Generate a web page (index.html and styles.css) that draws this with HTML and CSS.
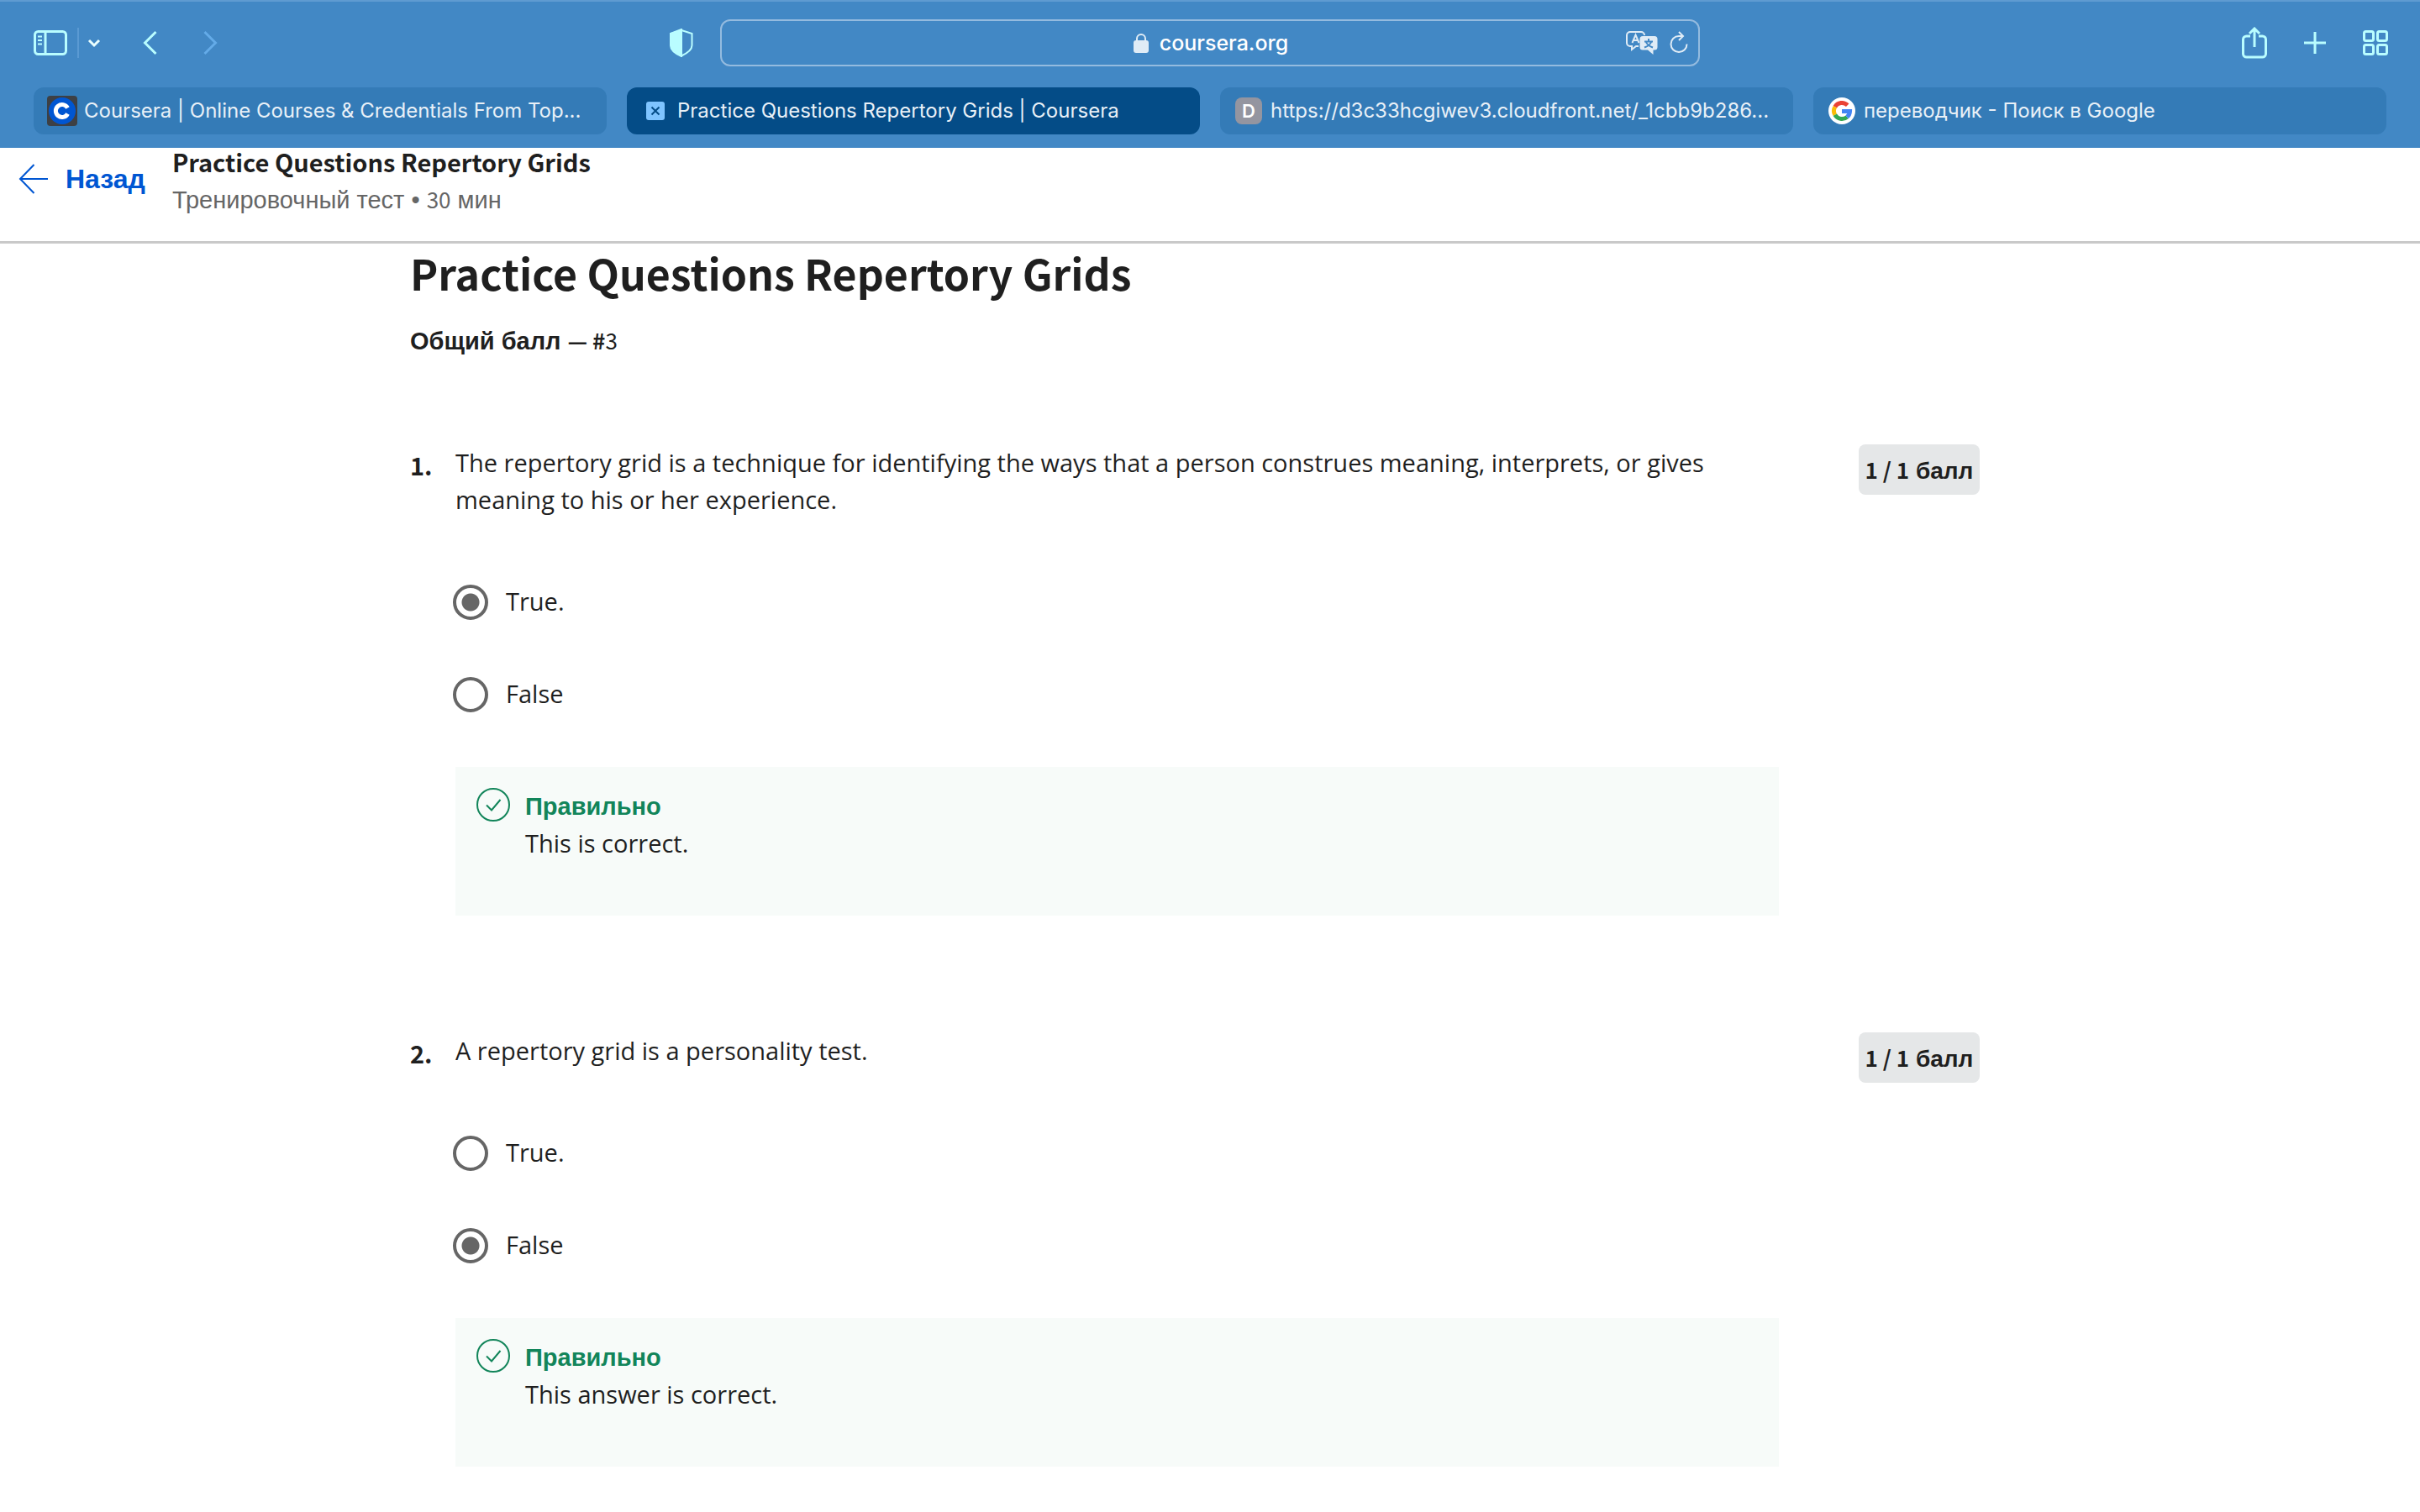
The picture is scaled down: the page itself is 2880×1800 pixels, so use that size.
FILE: index.html
```html
<!DOCTYPE html>
<html lang="ru">
<head>
<meta charset="utf-8">
<title>Practice Questions Repertory Grids | Coursera</title>
<link rel="stylesheet" href="styles.css">
</head>
<body>
<div class="browser">
  <div class="toolbar">
    <div class="tools tools-left">
      <button class="tool" aria-label="Sidebar"><svg width="40" height="30" viewBox="0 0 40 30"><rect x="1.500" y="1.500" width="37" height="27" rx="4"/><path d="M14 1v28"/><path d="M5 7.500h5M5 12h5M5 16.500h5" stroke-width="2"/></svg></button>
      <span class="divider"></span>
      <button class="tool tool-menu" aria-label="Tab groups"><svg width="16" height="12" viewBox="0 0 16 12"><path d="M2 3l6 6 6-6" stroke-width="3"/></svg></button>
      <button class="tool tool-back" aria-label="Back"><svg width="18" height="30" viewBox="0 0 18 30"><path d="M15.500 2L2.500 15l13 13" stroke-width="3"/></svg></button>
      <button class="tool tool-forward" aria-label="Forward" disabled><svg width="18" height="30" viewBox="0 0 18 30"><path d="M2.500 2l13 13-13 13" stroke-width="3"/></svg></button>
    </div>
    <button class="tool tool-shield" aria-label="Privacy report"><svg width="28" height="34" viewBox="0 0 28 34"><path d="M14 2L26.500 6v14c0 5-5 9-12.500 12.500C6.500 29 1.500 25 1.500 20V6z"/><path class="solid" d="M14 1L1 6v14c0 6 6 10 13 13z"/></svg></button>
    <div class="address">
      <span class="site">
        <svg width="18" height="24" viewBox="0 0 18 24"><rect class="solid" x="1" y="10" width="16" height="13" rx="2"/><path d="M4 11V7a5 5 0 0 1 10 0v4" stroke-width="2"/></svg>
        <span>coursera.org</span>
      </span>
      <button class="tool tool-page" aria-label="Translate"><svg width="38" height="28" viewBox="0 0 38 28"><path d="M15 18h-3l-5 4v-4H5a4 4 0 0 1-4-4V5a4 4 0 0 1 4-4h13a4 4 0 0 1 4 4"/><path d="M7.500 14L11.500 4.500l4 9.500M9 11h5"/><path class="solid" d="M20 6h14a3.500 3.500 0 0 1 3.500 3.500v9.500a3.500 3.500 0 0 1-3.500 3.500h-1.500V28L26 22.500h-6a3.500 3.500 0 0 1-3.500-3.500V9.500A3.500 3.500 0 0 1 20 6z" stroke="none"/><path class="cut" d="M27 9v3M22 12.500h10M30 13c-1 3-4 5-8 6.500M24 13c1 3 4 5 8 6.500"/></svg></button>
      <button class="tool tool-page" aria-label="Reload"><svg width="22" height="28" viewBox="0 0 22 28"><path d="M20.500 15.500a9.500 9.500 0 1 1-9.500-9.500h4M11 1l5 5-5 5"/></svg></button>
    </div>
    <div class="tools tools-right">
      <button class="tool" aria-label="Share"><svg width="30" height="38" viewBox="0 0 30 38"><path d="M10 11H5.500a4 4 0 0 0-4 4v17a4 4 0 0 0 4 4h19a4 4 0 0 0 4-4V15a4 4 0 0 0-4-4H20M15 24V2M9 8l6-6 6 6"/></svg></button>
      <button class="tool" aria-label="New tab"><svg width="28" height="28" viewBox="0 0 28 28"><path d="M14 1v26M1 14h26" stroke-width="3"/></svg></button>
      <button class="tool" aria-label="Tab overview"><svg width="30" height="30" viewBox="0 0 30 30"><rect x="1.500" y="1.500" width="11" height="11" rx="2"/><rect x="17.500" y="1.500" width="11" height="11" rx="2"/><rect x="1.500" y="17.500" width="11" height="11" rx="2"/><rect x="17.500" y="17.500" width="11" height="11" rx="2"/></svg></button>
    </div>
  </div>
  <nav class="tabs">
    <a class="tab" href="#"><svg width="36" height="36" viewBox="0 0 36 36"><rect width="36" height="36" rx="4" fill="#3d4045"/><circle cx="18" cy="18" r="16" fill="#0056d2"/><path d="M24.500 14.500a7.500 7.500 0 1 0 0 7" fill="none" stroke="#fff" stroke-width="5"/></svg><span>Coursera | Online Courses &amp; Credentials From Top...</span></a>
    <a class="tab tab-active" href="#"><svg width="36" height="22" viewBox="0 0 36 22"><rect x="7" width="22" height="22" rx="3" fill="#7fc4ff"/><path d="M13.500 6.500l9 9M22.500 6.500l-9 9" stroke="#044c87" stroke-width="2"/></svg><span>Practice Questions Repertory Grids | Coursera</span></a>
    <a class="tab" href="#"><span class="letter">D</span><span>https://d3c33hcgiwev3.cloudfront.net/_1cbb9b286...</span></a>
    <a class="tab" href="#"><svg width="36" height="32" viewBox="0 0 36 32"><circle cx="18" cy="16" r="16" fill="#fff"/><g fill="none" stroke-width="5"><path d="M24.700 9.300A9.500 9.500 0 0 0 9.800 11.200" stroke="#ea4335"/><path d="M9.800 11.200a9.500 9.500 0 0 0 0 9.600" stroke="#fbbc05"/><path d="M9.800 20.800a9.500 9.500 0 0 0 14.300 2.500" stroke="#34a853"/><path d="M24.100 23.300A9.500 9.500 0 0 0 27.500 16.500H18" stroke="#4285f4"/></g></svg><span>переводчик - Поиск в Google</span></a>
  </nav>
</div>

<header class="course-bar">
  <a class="back" href="#"><svg width="36" height="36" viewBox="0 0 36 36"><path d="M18.500 1L2 18l16.500 17M2 18h33"/></svg><span>Назад</span></a>
  <div class="course">
    <div class="course-name">Practice Questions Repertory Grids</div>
    <div class="course-info">Тренировочный тест • <span class="latin">30</span> мин</div>
  </div>
</header>

<main class="quiz">
  <h1>Practice Questions Repertory Grids</h1>
  <p class="total"><b>Общий балл <span class="latin">— #</span></b><span class="latin">3</span></p>

  <section class="question">
    <div class="number">1.</div>
    <div class="body">
      <p class="prompt">The repertory grid is a technique for identifying the ways that a person construes meaning, interprets, or gives meaning to his or her experience.</p>
      <div class="options">
        <label class="option"><input type="radio" name="q1" checked><span>True.</span></label>
        <label class="option"><input type="radio" name="q1"><span>False</span></label>
      </div>
      <div class="feedback">
        <svg width="40" height="40" viewBox="0 0 40 40"><circle cx="20" cy="20" r="19"/><path d="M12 20.500l6 6L28.500 14"/></svg>
        <div><p class="verdict">Правильно</p><p class="comment">This is correct.</p></div>
      </div>
    </div>
    <div class="score"><span class="latin">1 / 1</span> балл</div>
  </section>

  <section class="question">
    <div class="number">2.</div>
    <div class="body">
      <p class="prompt">A repertory grid is a personality test.</p>
      <div class="options">
        <label class="option"><input type="radio" name="q2"><span>True.</span></label>
        <label class="option"><input type="radio" name="q2" checked><span>False</span></label>
      </div>
      <div class="feedback">
        <svg width="40" height="40" viewBox="0 0 40 40"><circle cx="20" cy="20" r="19"/><path d="M12 20.500l6 6L28.500 14"/></svg>
        <div><p class="verdict">Правильно</p><p class="comment">This answer is correct.</p></div>
      </div>
    </div>
    <div class="score"><span class="latin">1 / 1</span> балл</div>
  </section>
</main>
</body>
</html>
```
FILE: styles.css
```css
* { box-sizing: border-box; }
body {
  margin: 0;
  background: #fff;
  color: #1f1f1f;
  font-family: "Open Sans", sans-serif;
  font-size: 29px;
  line-height: 44px;
}
h1, p { margin: 0; }
a { color: inherit; text-decoration: none; }
svg { display: block; flex: none; }
button { padding: 0; border: 0; background: none; font: inherit; }
.latin {
  font-family: "Noto Sans CJK SC", sans-serif;
  font-size: 26px;
  line-height: 1;
}

/* Browser chrome */
.browser {
  padding: 0 40px 16px;
  background: #4288c5;
  border-top: 2px solid #5f9bd1;
  font-family: Inter, sans-serif;
}
.toolbar {
  display: grid;
  grid-template-columns: 757px 30px 1fr 817px;
  align-items: center;
  height: 98px;
}
.tools { display: flex; align-items: center; }
.tools-right { justify-content: flex-end; gap: 43px; margin-right: -2px; }
.tool svg, .site svg { fill: none; stroke: #b9fdff; stroke-width: 2; }
.tools svg { stroke-width: 3; }
.tool .solid { fill: #b9fdff; }
.tool:disabled svg { stroke: #64abe8; }
.divider { width: 2px; height: 36px; margin: 0 10px 0 12px; background: #5a9ad3; }
.tool-menu { margin-right: 50px; }
.tool-menu svg { stroke: #eaffff; }
.tool-back { margin-right: 53px; }
.address {
  display: flex;
  align-items: center;
  gap: 14px;
  height: 56px;
  margin-left: 30px;
  padding: 0 12px;
  border: 2px solid #94bbdf;
  border-radius: 12px;
}
.site {
  flex: 1;
  display: flex;
  justify-content: center;
  align-items: center;
  gap: 13px;
  padding-left: 90px;
  color: #fff;
  font-size: 25px;
  font-weight: 500;
}
.site svg, .tool-page svg { stroke: #e0ecf6; }
.site .solid, .tool-page .solid { fill: #e0ecf6; }
.tool-page .cut { stroke: #4288c5; }
.tabs {
  display: grid;
  grid-template-columns: repeat(4, 1fr);
  gap: 24px;
  margin-top: 4px;
}
.tab {
  display: flex;
  align-items: center;
  gap: 8px;
  height: 56px;
  padding: 0 16px;
  overflow: hidden;
  border-radius: 12px;
  background: #347bb7;
  color: #e8f0f7;
  font-size: 24px;
  white-space: nowrap;
}
.tab-active { background: #044c87; }
.letter {
  width: 32px;
  height: 32px;
  margin: 0 2px;
  border-radius: 8px;
  background: #9495a0;
  color: #fff;
  font-size: 22px;
  font-weight: 600;
  line-height: 32px;
  text-align: center;
}

/* Course bar */
.course-bar {
  display: flex;
  gap: 32px;
  height: 114px;
  padding-left: 22px;
  border-bottom: 3px solid #c9c9c9;
}
.back {
  display: flex;
  align-items: center;
  gap: 20px;
  height: 74px;
  color: #0056d2;
  font-family: "Liberation Sans", Arial, sans-serif;
  font-size: 32px;
  font-weight: 700;
}
.back svg { fill: none; stroke: #0056d2; stroke-width: 2; }
.course-name {
  height: 40px;
  font-family: "Noto Sans CJK SC", sans-serif;
  font-size: 29px;
  font-weight: 700;
  line-height: 32px;
}
.course-info {
  color: #666;
  font-family: "Liberation Sans", Arial, sans-serif;
}

/* Quiz */
.quiz { padding: 0 524px 0 488px; }
h1 {
  font-family: "Noto Sans CJK SC", sans-serif;
  font-size: 50px;
  font-weight: 700;
  line-height: 68px;
}
.total {
  margin-top: 26px;
  font-family: "Liberation Sans", Arial, sans-serif;
}
.question {
  display: grid;
  grid-template-columns: 54px 1fr 144px;
  margin-top: 101px;
}
.question + .question { margin-top: 139px; }
.number {
  padding-top: 2px;
  font-family: "Noto Sans CJK SC", sans-serif;
  font-weight: 700;
}
.body { padding-right: 95px; }
.options {
  display: grid;
  gap: 66px;
  padding: 77px 0 65px;
}
.option { display: flex; align-items: center; gap: 21px; }
.option input {
  appearance: none;
  width: 42px;
  height: 42px;
  margin: 2px 0 0 -3px;
  border: 4px solid #666;
  border-radius: 50%;
}
.option input:checked { background: radial-gradient(circle, #666 10px, transparent 11px); }
.feedback {
  display: flex;
  gap: 18px;
  padding: 25px 25px 64px;
  background: #f7fbf9;
}
.feedback svg { fill: none; stroke: #12855a; stroke-width: 2; }
.verdict {
  color: #12855a;
  font-family: "Liberation Sans", Arial, sans-serif;
  font-weight: 700;
}
.score {
  height: 60px;
  border-radius: 8px;
  background: #e5e7e8;
  font-family: "Liberation Sans", Arial, sans-serif;
  font-size: 28px;
  font-weight: 700;
  line-height: 64px;
  text-align: center;
}
```
